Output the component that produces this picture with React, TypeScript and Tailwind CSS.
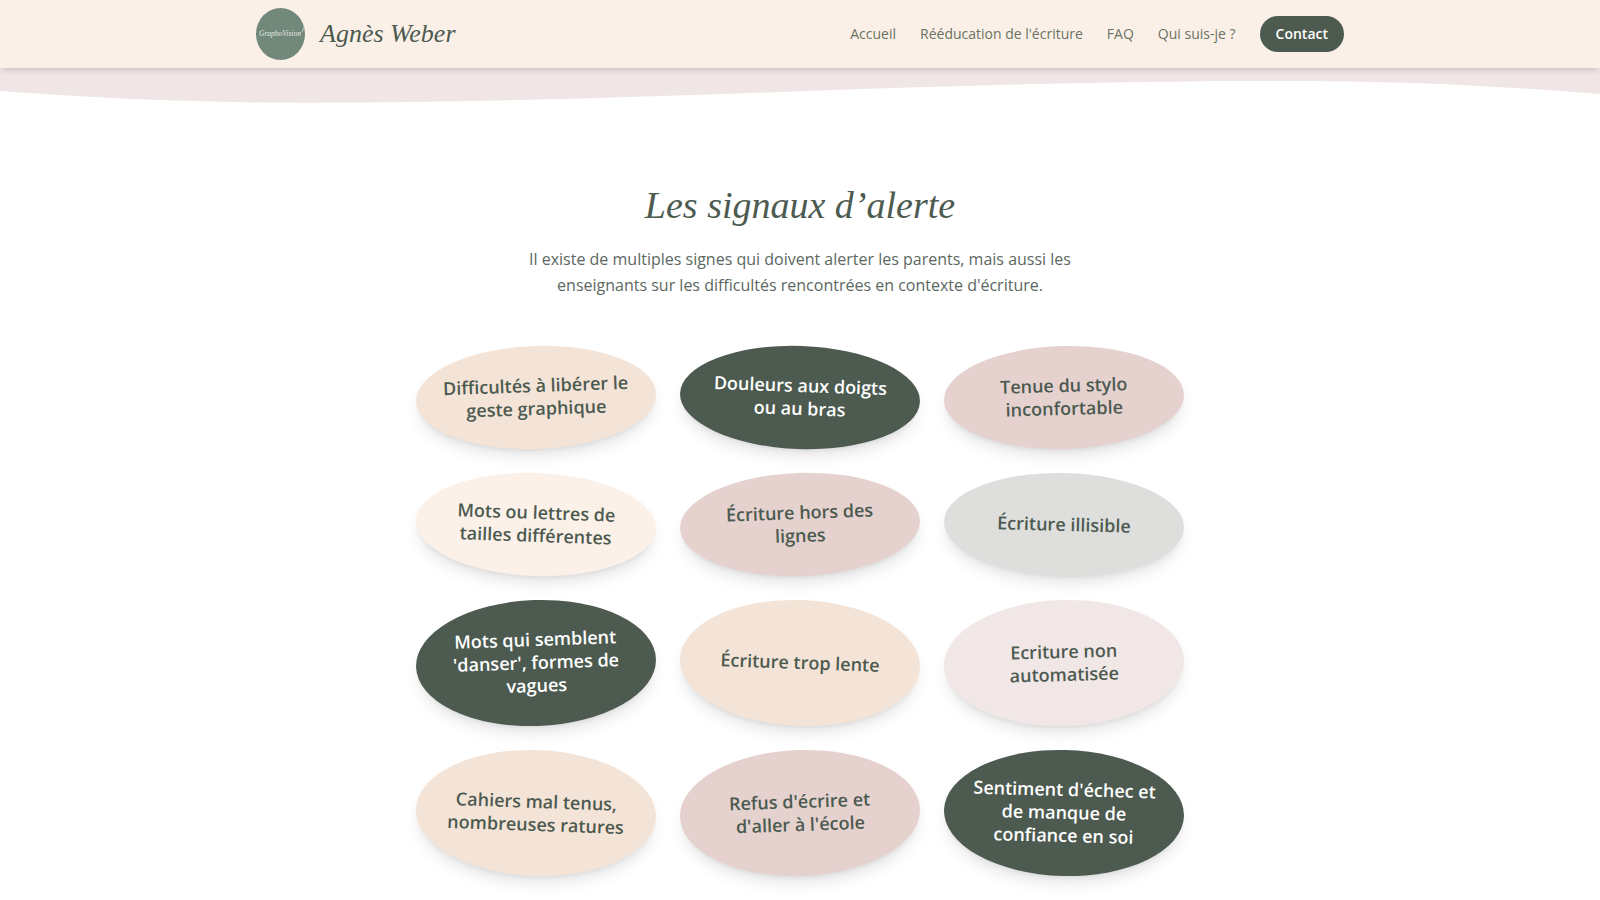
import clsx from "clsx";

const links = [
  { label: "Accueil", href: "#accueil" },
  { label: "Rééducation de l'écriture", href: "#reeducation" },
  { label: "FAQ", href: "#faq" },
  { label: "Qui suis-je ?", href: "#qui-suis-je" },
];

const signals = [
  { text: "Difficultés à libérer le geste graphique", style: "bg-[#f4e4d7] -rotate-2" },
  { text: "Douleurs aux doigts ou au bras", style: "bg-[#4c5a50] text-white rotate-2" },
  { text: "Tenue du stylo inconfortable", style: "bg-[#e5d2cf] rotate-[-1.5deg]" },
  { text: "Mots ou lettres de tailles différentes", style: "bg-[#fcf1e9] rotate-2" },
  { text: "Écriture hors des lignes", style: "bg-[#e5d2cf] -rotate-2" },
  { text: "Écriture illisible", style: "bg-[#dededc] rotate-[1.5deg]" },
  { text: "Mots qui semblent 'danser', formes de vagues", style: "bg-[#4c5a50] text-white -rotate-2" },
  { text: "Écriture trop lente", style: "bg-[#f4e4d7] rotate-2" },
  { text: "Ecriture non automatisée", style: "bg-[#f2e7e7] rotate-[-1.5deg]" },
  { text: "Cahiers mal tenus, nombreuses ratures", style: "bg-[#f4e4d7] rotate-2" },
  { text: "Refus d'écrire et d'aller à l'école", style: "bg-[#e5d2cf] -rotate-2" },
  { text: "Sentiment d'échec et de manque de confiance en soi", style: "bg-[#4c5a50] text-white rotate-[1.5deg]" },
];

function Logo() {
  return (
    <svg viewBox="0 0 52 52" className="h-13 w-13" aria-hidden>
      <ellipse cx="24.5" cy="26" rx="24.5" ry="26" fill="#71887a" />
      <text
        x="3"
        y="28"
        fontSize="7.5"
        fontStyle="italic"
        fontFamily="Liberation Serif, serif"
        fill="#e6ebe6"
      >
        GraphoVision
      </text>
      <path d="M46 24c1-3 2-4 2-6" stroke="#e6ebe6" strokeWidth="0.7" fill="none" />
    </svg>
  );
}

function Header() {
  return (
    <header className="relative z-10 bg-[#fbf0e7] shadow-md">
      <div className="mx-auto flex max-w-6xl items-center justify-between px-8 py-2">
        <a href="#accueil" className="flex items-center gap-3">
          <Logo />
          <span className="font-['Liberation_Serif',serif] text-[26px] leading-9 italic">
            Agnès Weber
          </span>
        </a>
        <nav className="flex items-center gap-6 text-sm">
          {links.map((link) => (
            <a key={link.href} href={link.href} className="text-[#6a7263] hover:underline">
              {link.label}
            </a>
          ))}
          <a href="#contact" className="rounded-full bg-[#4c5a50] px-4 py-2 font-semibold text-white">
            Contact
          </a>
        </nav>
      </div>
    </header>
  );
}

function Wave() {
  return (
    <svg
      viewBox="0 0 1600 36"
      preserveAspectRatio="none"
      className="block h-9 w-full"
      aria-hidden
    >
      <path
        d="M0 0V23C100 30.5 200 34.7 306 34.7C480 34.7 640 29 800 23.3C960 17.5 1120 13 1290 13C1400 13 1500 18 1600 26V0Z"
        fill="#f1e6e6"
      />
    </svg>
  );
}

export default function App() {
  return (
    <div className="min-h-screen bg-white font-['Open_Sans',sans-serif] text-[#4c5a50]">
      <Header />
      <Wave />
      <main className="mx-auto max-w-3xl pt-18 pb-6 text-center">
        <h2 className="font-['Liberation_Serif',serif] text-[38px] leading-[58px] italic">
          Les signaux d’alerte
        </h2>
        <p className="mx-auto mt-3 max-w-xl leading-[26px] text-[#5c685f]">
          Il existe de multiples signes qui doivent alerter les parents, mais aussi les
          enseignants sur les difficultés rencontrées en contexte d'écriture.
        </p>
        <ul className="mt-12 grid grid-cols-3 gap-6">
          {signals.map((signal) => (
            <li
              key={signal.text}
              className={clsx(
                "flex items-center justify-center rounded-[50%] px-6 pt-7 pb-[29px] text-[18px] leading-[23px] font-semibold shadow-lg",
                signal.style
              )}
            >
              {signal.text}
            </li>
          ))}
        </ul>
      </main>
    </div>
  );
}
